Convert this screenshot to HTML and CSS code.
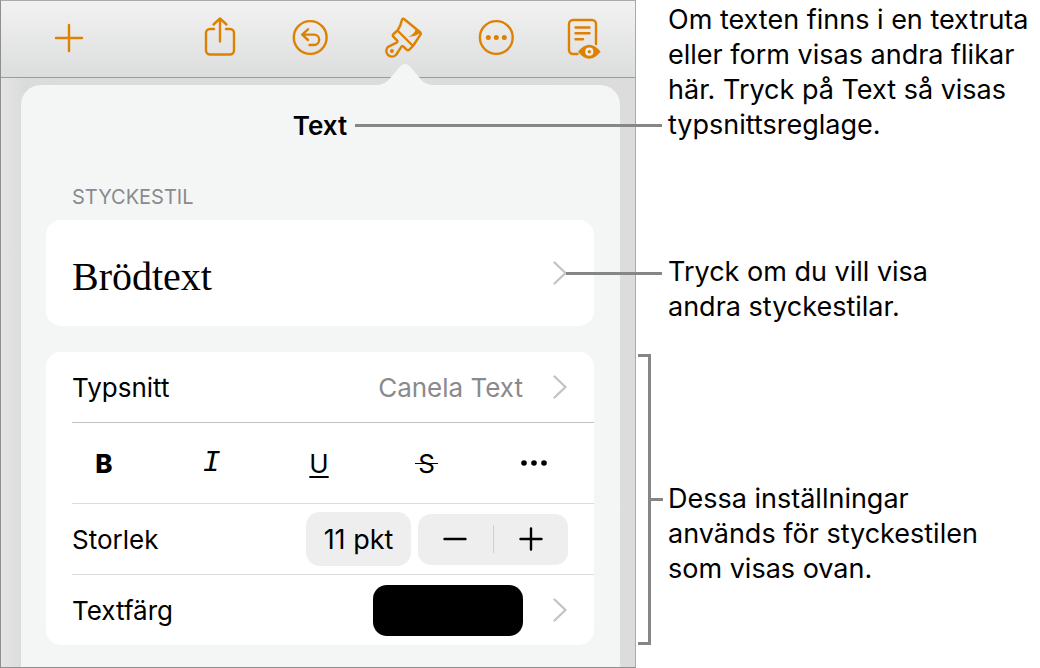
FILE: index.html
```html
<!DOCTYPE html>
<html lang="sv">
<head>
<meta charset="utf-8">
<meta name="viewport" content="width=device-width, initial-scale=1">
<title>Textreglage</title>
<link rel="stylesheet" href="styles.css">
</head>
<body>
<main class="figure">
  <section class="device">
    <nav class="toolbar" aria-label="Verktyg">
      <button class="tool tool-add" type="button" aria-label="Infoga">
        <svg viewBox="0 0 44 44"><path d="M22 9v26M9 22h26"/></svg>
      </button>
      <button class="tool" type="button" aria-label="Dela">
        <svg viewBox="0 0 44 44"><path d="M17 13h-4a4 4 0 0 0-4 4v17.500a4 4 0 0 0 4 4h20a4 4 0 0 0 4-4V17a4 4 0 0 0-4-4h-4M23 25.500V3M16.500 8.500L23 2.500l6.500 6"/></svg>
      </button>
      <button class="tool" type="button" aria-label="Ångra">
        <svg viewBox="0 0 44 44"><circle cx="21.200" cy="21.500" r="16.400"/><path d="M19 13.300l-5.800 5.300 5.800 5.400M13.500 18.600h11.500a5 5 0 0 1 0 10.400h-4.500"/></svg>
      </button>
      <button class="tool" type="button" aria-label="Format">
        <svg viewBox="0 0 44 44"><path d="M16.500 14.500L12.500 18q-1.300 1.300-.2 2.600l3.700 3.700q1 1.300-.3 2.300L7 30.800a5.600 5.600 0 1 0 8 8.200l5.300-8.200q1-1.300 2.200-.2l3.400 3.300q1.200 1 2.400-.2L32 30zM16.500 14.500Q20 9 20.700 4.700 21.300 1.700 23.600 3.500L38.600 15.700q2 1.700.5 3.500L32 30"/><path class="solid" d="M34.800 12.500Q34 18 27.500 20.800q6 .2 11.500-3.500z"/><circle class="solid" cx="10.900" cy="35" r="2"/></svg>
      </button>
      <button class="tool" type="button" aria-label="Mer">
        <svg viewBox="0 0 44 44"><circle cx="23.300" cy="21.500" r="16.400"/><g class="solid"><circle cx="15.300" cy="21.500" r="2.500"/><circle cx="23.300" cy="21.500" r="2.500"/><circle cx="31.300" cy="21.500" r="2.500"/></g></svg>
      </button>
      <button class="tool" type="button" aria-label="Visa dokument">
        <svg viewBox="0 0 44 44"><path d="M12.500 38h-4.500a4 4 0 0 1-4-4V8a4 4 0 0 1 4-4h19a4 4 0 0 1 4 4v20M10.500 11.500h14M10.500 17.300h14M10.500 23.300h7.500"/><path class="solid" d="M13 35.700Q24.300 21.700 35.600 35.700 24.300 49.700 13 35.700z"/><circle class="ring" cx="24.300" cy="35.700" r="2.900"/></svg>
      </button>
    </nav>

    <section class="popover">
      <svg class="popover-arrow" viewBox="0 0 56 22" aria-hidden="true"><path d="M0 22C8 21.500 11 18 15 13L23 3.500Q28-2 33 3.500L41 13C45 18 48 21.500 56 22z"/></svg>
      <header class="popover-head">
        <h1 class="title">Text</h1>
        <span class="leader title-leader"></span>
      </header>

      <h2 class="section-label">STYCKESTIL</h2>
      <div class="card style-card">
        <button class="row style-row" type="button">
          <span class="style-name">Brödtext</span>
          <svg class="chevron" viewBox="0 0 14 26" aria-hidden="true"><path d="M1.500 2.500L12.500 13 1.500 23.500"/></svg>
        </button>
        <span class="leader style-leader"></span>
      </div>

      <div class="card">
        <button class="row" type="button">
          <span>Typsnitt</span>
          <span class="value">Canela Text</span>
          <svg class="chevron" viewBox="0 0 14 26" aria-hidden="true"><path d="M1.500 2.500L12.500 13 1.500 23.500"/></svg>
        </button>
        <div class="divider divider-strong"></div>
        <div class="styles">
          <button class="style-button bold" type="button" aria-label="Fetstil">B</button>
          <button class="style-button italic" type="button" aria-label="Kursiv">I</button>
          <button class="style-button underline" type="button" aria-label="Understruken">U</button>
          <button class="style-button strike" type="button" aria-label="Genomstruken"><span>S</span></button>
          <button class="style-button" type="button" aria-label="Fler textalternativ">
            <svg class="dots" viewBox="0 0 28 8"><circle cx="4" cy="4" r="2.800"/><circle cx="14" cy="4" r="2.800"/><circle cx="24" cy="4" r="2.800"/></svg>
          </button>
        </div>
        <div class="divider"></div>
        <div class="row size-row">
          <span>Storlek</span>
          <button class="size" type="button">11 pkt</button>
          <div class="stepper">
            <button class="step" type="button" aria-label="Minska"><svg viewBox="0 0 24 24"><path d="M1.500 12h21"/></svg></button>
            <button class="step" type="button" aria-label="Öka"><svg viewBox="0 0 24 24"><path d="M1.500 12h21M12 1.500v21"/></svg></button>
          </div>
        </div>
        <div class="divider"></div>
        <button class="row" type="button">
          <span>Textfärg</span>
          <span class="swatch"></span>
          <svg class="chevron" viewBox="0 0 14 26" aria-hidden="true"><path d="M1.500 2.500L12.500 13 1.500 23.500"/></svg>
        </button>
      </div>
    </section>
  </section>

  <aside class="notes">
    <p class="note">Om texten finns i en textruta<br>eller form visas andra flikar<br>här. Tryck på Text så visas<br>typsnittsreglage.</p>
    <p class="note note-style">Tryck om du vill visa<br>andra styckestilar.</p>
    <p class="note note-settings"><span class="bracket"></span>Dessa inställningar<br>används för styckestilen<br>som visas ovan.</p>
  </aside>
</main>
</body>
</html>
```

FILE: styles.css
```css
* {
  box-sizing: border-box;
}

body {
  margin: 0;
  background: #fff;
  color: #000;
  font-family: Inter, "Liberation Sans", sans-serif;
  font-size: 26px;
}

h1,
h2,
p {
  margin: 0;
}

button {
  margin: 0;
  padding: 0;
  border: 0;
  background: none;
  color: inherit;
  font: inherit;
}

svg {
  display: block;
  fill: none;
  stroke-linecap: round;
  stroke-linejoin: round;
}

.figure {
  display: flex;
  min-height: 100vh;
}

/* App window */
.device {
  display: flex;
  flex: 1;
  flex-direction: column;
  border: 1px solid #8f8f8f;
  border-top-color: #aaa;
  border-right-color: #aaa;
  background: linear-gradient(90deg, #e5e5e5, #dadbdb 24px, #dcdcdc);
}

.toolbar {
  display: flex;
  align-items: center;
  gap: 48px;
  height: 77px;
  padding: 0 26px 2px 46px;
  border-bottom: 1px solid #9b9b9b;
  background: linear-gradient(#f2f2f2, #dcdddd);
}

.tool {
  width: 44px;
  height: 44px;
}

.tool-add {
  margin-right: auto;
}

.tool svg {
  width: 44px;
  height: 44px;
  overflow: visible;
  stroke: #df8100;
  stroke-width: 2.4;
}

.tool .solid {
  fill: #df8100;
  stroke: none;
}

.tool .ring {
  stroke: #eee;
  stroke-width: 2.4;
}

/* Popover */
.popover {
  position: relative;
  flex: 1;
  margin: 7px 15px 0 20px;
  padding: 0 26px 21px 25px;
  border-radius: 20px 20px 0 0;
  background: #f4f6f6;
}

.popover-arrow {
  position: absolute;
  right: 187px;
  bottom: 100%;
  width: 56px;
  height: 22px;
  fill: #f4f6f6;
}

.popover-head {
  display: grid;
  grid-template-columns: 1fr auto 1fr;
  align-items: center;
  height: 81px;
}

.title {
  grid-column: 2;
  font-size: 26px;
  font-weight: 600;
}

.leader {
  height: 3px;
  background: #868686;
}

.title-leader {
  z-index: 1;
  margin-left: 8px;
  margin-right: -68px;
}

.section-label {
  margin: 16px 0 8px 26px;
  color: #8a8a8e;
  font-size: 20px;
  font-weight: 400;
  line-height: 30px;
}

.card {
  position: relative;
  border-radius: 15px;
  background: #fff;
}

.style-card {
  margin-bottom: 26px;
}

.row {
  display: flex;
  align-items: center;
  width: 100%;
  height: 70px;
  padding: 0 27px 0 26px;
  text-align: left;
}

.row > :first-child {
  margin-right: auto;
}

.style-row {
  height: 106px;
}

.style-name {
  padding-top: 6px;
  font-family: "Liberation Serif", serif;
  font-size: 40px;
}

.style-leader {
  position: absolute;
  top: 52px;
  right: -68px;
  width: 96px;
}

.value {
  color: #8a8a8e;
}

.chevron {
  width: 14px;
  height: 26px;
  margin-left: 30px;
  stroke: #c4c4c6;
  stroke-width: 2.4;
}

.divider {
  height: 1px;
  margin-left: 26px;
  background: #dcdcde;
}

.divider-strong {
  background: #c2c2c4;
}

.styles {
  display: grid;
  grid-template-columns: repeat(5, 1fr);
  height: 80px;
  padding: 0 6px 0 4px;
}

.style-button {
  display: grid;
  place-items: center;
}

.bold {
  font-weight: 800;
}

.italic {
  font-family: "Liberation Mono", monospace;
  font-size: 30px;
  font-style: italic;
}

.underline {
  text-decoration: underline 2px;
  text-underline-offset: 3px;
}

.strike span {
  position: relative;
}

.strike span::after {
  position: absolute;
  top: 50%;
  right: -3px;
  left: -3px;
  height: 1px;
  background: #000;
  content: "";
}

.dots {
  width: 28px;
  height: 8px;
  fill: #000;
}

.size-row {
  gap: 7px;
  padding-right: 26px;
}

.size {
  width: 105px;
  height: 54px;
  border-radius: 14px;
  background: #eee;
  font-size: 27px;
}

.stepper {
  display: flex;
  align-items: center;
  width: 150px;
  height: 51px;
  border-radius: 13px;
  background: #eee;
}

.step {
  display: grid;
  flex: 1;
  place-items: center;
  height: 28px;
}

.step + .step {
  border-left: 1px solid #cfcfd1;
}

.step svg {
  width: 24px;
  height: 24px;
  stroke: #000;
  stroke-width: 2.4;
}

.swatch {
  width: 150px;
  height: 51px;
  border-radius: 14px;
  background: #000;
}

/* Explanations beside the window */
.notes {
  display: flex;
  flex: none;
  flex-direction: column;
  width: 404px;
  padding: 2px 0 0 32px;
}

.note {
  font-size: 27px;
  line-height: 35px;
  white-space: nowrap;
}

.note-style {
  margin-top: 112px;
}

.note-settings {
  position: relative;
  margin-top: 157px;
}

.bracket {
  position: absolute;
  top: -127px;
  left: -30px;
  width: 13px;
  height: 291px;
  border: 3px solid #868686;
  border-left: 0;
}

.bracket::after {
  position: absolute;
  top: 141px;
  left: 13px;
  width: 12px;
  height: 3px;
  background: #868686;
  content: "";
}
```
